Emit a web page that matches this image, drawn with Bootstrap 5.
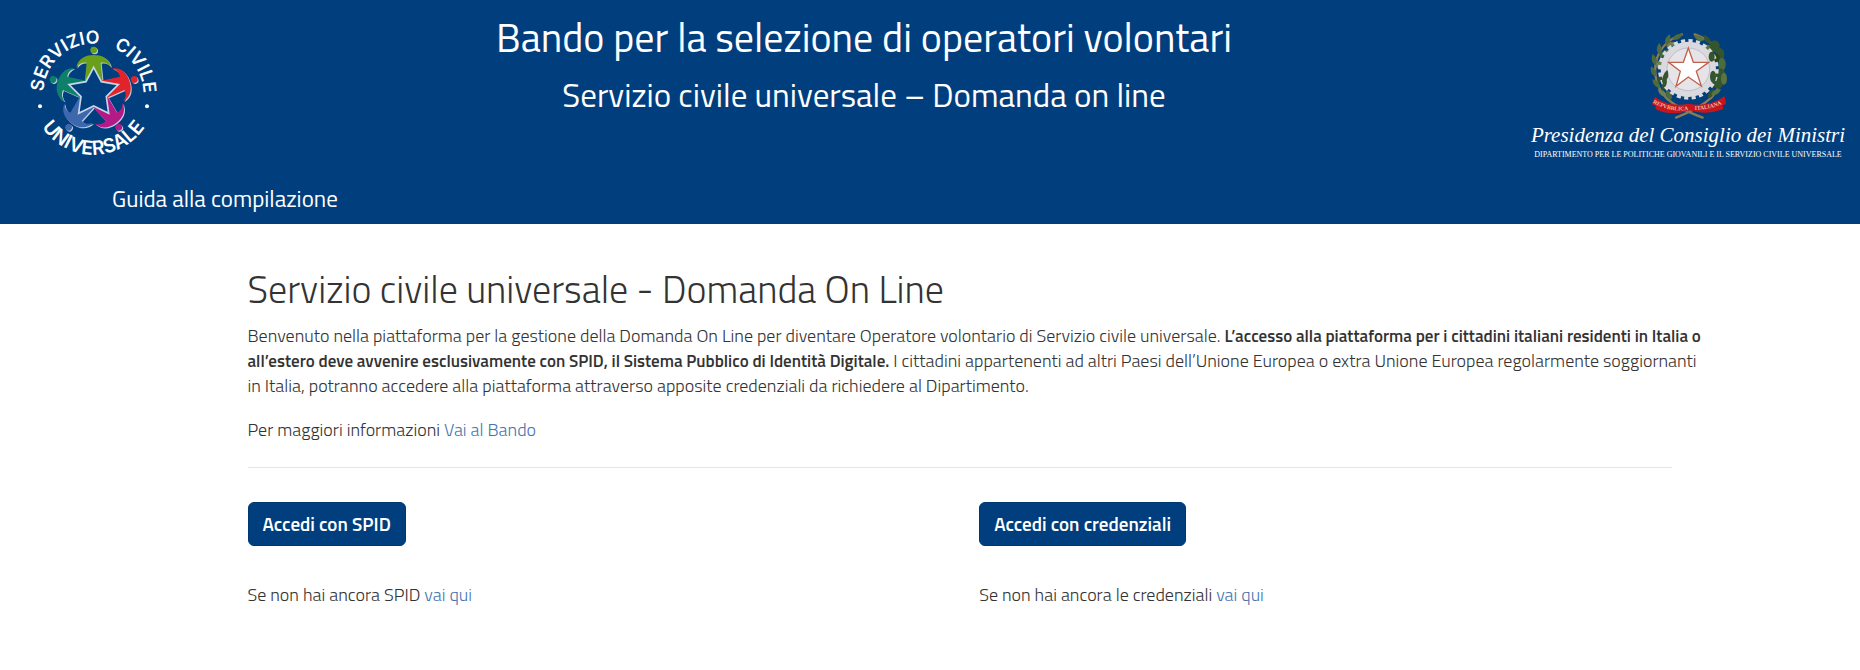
<!DOCTYPE html>
<html lang="it">
<head>
<meta charset="utf-8">
<meta name="viewport" content="width=device-width, initial-scale=1">
<title>Servizio civile universale - Domanda On Line</title>
<link rel="stylesheet" href="https://cdn.jsdelivr.net/npm/bootstrap@5.3.0/dist/css/bootstrap.min.css">
<style>
  body { font-family: "Titillium Web", Roboto, sans-serif; font-size: 18px; line-height: 25px; font-weight: 300; color: #333; }
  a { color: #4675ae; text-decoration: none; }
  a:hover { text-decoration: underline; }
  b { font-size: 17px; line-height: 1; font-weight: 600; }
  .site-head { background: #003e7e; color: #fff; }
  .head-left { width: 200px; padding: 27px 0 0 28px; }
  .head-right { width: 332px; padding: 27px 12px 0 0; }
  .head-title { font-size: 40px; line-height: 44px; font-weight: 400; margin: 16px 0 15px; }
  .head-sub { font-size: 33px; line-height: 40px; font-weight: 400; margin: 0; }
  .script-line { font: italic 21px/26px "Liberation Serif", serif; }
  .dept-line { font: 8px/14px "Liberation Serif", serif; }
  .guide-nav { padding: 22px 0 10px 112px; }
  .guide-nav a { color: #fff; font-size: 23px; line-height: 30px; font-weight: 400; }
  .page-main { width: 79%; margin-left: 12.5%; padding: 40px 15px 0; }
  .page-title { font-size: 38px; line-height: 50px; font-weight: 300; margin: 0 0 9px; }
  .intro { margin: 0 -22px 19px 0; }
  .rule { border-color: #e6e6e6; margin: 25px 15px 34px 0; opacity: 1; }
  .btn-blue { --bs-btn-color: #fff; --bs-btn-bg: #003e7e; --bs-btn-border-color: #00376f; --bs-btn-hover-color: #fff; --bs-btn-hover-bg: #00305f; --bs-btn-hover-border-color: #00305f; --bs-btn-active-bg: #00305f; --bs-btn-active-color: #fff;
    font-size: 19px; line-height: 30px; font-weight: 600; padding: 6px 14px; border-radius: 6px; }
  .hint { margin: 36px 0 0; }
</style>
</head>
<body>
<header class="site-head">
  <div class="d-flex">
    <div class="head-left flex-shrink-0">
      <svg width="130" height="130" viewBox="55 50 390 390" role="img" aria-label="Servizio civile universale" class="d-block overflow-visible">
        <defs>
          <path id="arcTop" d="M101 250 A150 150 0 0 1 401 250"/>
          <path id="arcBottom" d="M65 247 A186 186 0 0 0 437 247"/>
          <g id="person">
            <circle cx="252" cy="119" r="10"/>
            <path d="M200 172C205 143 230 134 252 134S298 142 304 170C296 160 286 154 273 157L279 214L252 222L225 214L231 157C218 155 208 161 200 172Z"/>
          </g>
        </defs>
        <g fill="#b9cbe0" transform="translate(3 3)">
          <use href="#person"/>
          <use href="#person" transform="rotate(72 252 247)"/>
          <use href="#person" transform="rotate(144 252 247)"/>
          <use href="#person" transform="rotate(216 252 247)"/>
          <use href="#person" transform="rotate(288 252 247)"/>
        </g>
        <use href="#person" fill="#6a9f1c"/>
        <use href="#person" fill="#e3232b" transform="rotate(72 252 247)"/>
        <use href="#person" fill="#b41a87" transform="rotate(144 252 247)"/>
        <use href="#person" fill="#3e68ae" transform="rotate(216 252 247)"/>
        <use href="#person" fill="#0c8069" transform="rotate(288 252 247)"/>
        <path d="M252 171L275 214L326 223L290 259L297 309L252 287L207 309L214 259L178 223L229 214Z" fill="#003e7e" stroke="#c5d6e8" stroke-width="5"/>
        <g fill="#fff" font-family="Inter, sans-serif" font-weight="600" font-size="54">
          <text><textPath href="#arcTop" startOffset="6">SERVIZIO</textPath></text>
          <text><textPath href="#arcTop" startOffset="470" text-anchor="end">CIVILE</textPath></text>
          <text font-size="58"><textPath href="#arcBottom" startOffset="50%" text-anchor="middle">UNIVERSALE</textPath></text>
        </g>
        <circle cx="91" cy="288" r="6" fill="#fff"/><circle cx="412" cy="288" r="6" fill="#fff"/>
      </svg>
    </div>
    <div class="flex-grow-1 text-center">
      <h1 class="head-title">Bando per la selezione di operatori volontari</h1>
      <h2 class="head-sub">Servizio civile universale – Domanda on line</h2>
    </div>
    <div class="head-right flex-shrink-0 d-flex flex-column align-items-center text-nowrap">
      <svg width="84" height="95" viewBox="410 50 252 285" role="img" aria-label="Repubblica Italiana">
        <defs>
          <path id="leaf" d="M0 0C-10 -8 -10 -22 0 -34C9 -22 9 -8 0 0Z"/>
          <path id="ribbonL" d="M430 277Q484 310 550 297"/>
          <path id="ribbonR" d="M556 299Q610 298 652 274"/>
        </defs>
        <g fill="none" stroke="#8b7a55" stroke-width="7" stroke-linecap="round">
          <path d="M518 72C430 102 414 200 470 262Q500 292 580 322"/>
          <path d="M556 72C650 102 662 200 606 262Q574 292 500 322"/>
        </g>
        <g fill="#4d6b3c">
          <use href="#leaf" transform="translate(490 88) rotate(62)"/>
          <use href="#leaf" transform="translate(470 104) rotate(20)"/>
          <use href="#leaf" transform="translate(470 108) rotate(70)" fill="#6f8050"/>
          <use href="#leaf" transform="translate(450 132) rotate(0)"/>
          <use href="#leaf" transform="translate(452 140) rotate(48)"/>
          <use href="#leaf" transform="translate(439 164) rotate(-15)"/>
          <use href="#leaf" transform="translate(442 174) rotate(30)" fill="#6f8050"/>
          <use href="#leaf" transform="translate(440 198) rotate(-26)"/>
          <use href="#leaf" transform="translate(446 218) rotate(26)" fill="#35522e"/>
          <use href="#leaf" transform="translate(452 232) rotate(-42)"/>
          <use href="#leaf" transform="translate(462 240) rotate(8)" fill="#35522e"/>
          <use href="#leaf" transform="translate(472 258) rotate(-52)" fill="#6f8050"/>
          <use href="#leaf" transform="translate(486 268) rotate(-25)"/>
        </g>
        <g fill="#35552e">
          <use href="#leaf" transform="translate(584 90) rotate(-65)" fill="#5a753f"/>
          <use href="#leaf" transform="translate(604 100) rotate(-40)"/>
          <use href="#leaf" transform="translate(612 112) rotate(-82)" fill="#5a753f"/>
          <ellipse cx="616" cy="108" rx="15" ry="18"/>
          <ellipse cx="631" cy="132" rx="14" ry="19"/>
          <ellipse cx="618" cy="143" rx="13" ry="14" fill="#26451f"/>
          <ellipse cx="638" cy="162" rx="11" ry="20" fill="#4d6b3c"/>
          <ellipse cx="631" cy="190" rx="17" ry="16"/>
          <ellipse cx="626" cy="217" rx="16" ry="18"/>
          <ellipse cx="644" cy="205" rx="9" ry="18" fill="#5a753f"/>
          <use href="#leaf" transform="translate(596 264) rotate(34)"/>
          <use href="#leaf" transform="translate(606 254) rotate(60)" fill="#5a753f"/>
        </g>
        <circle cx="537" cy="177" r="83" fill="#d9d9df"/>
        <circle cx="537" cy="177" r="86" fill="none" stroke="#d9d9df" stroke-width="10" stroke-dasharray="12.5 10"/>
        <circle cx="537" cy="177" r="64" fill="#e6e4e8" stroke="#bdbfca" stroke-width="3"/>
        <g fill="#35552e">
          <use href="#leaf" transform="translate(468 228) rotate(-8)"/>
          <use href="#leaf" transform="translate(466 212) rotate(14)"/>
          <ellipse cx="607" cy="139" rx="9" ry="15"/>
          <ellipse cx="611" cy="199" rx="9" ry="18"/>
        </g>
        <path d="M537 113L552 156L598 156L561 183L576 227L537 200L500 228L513 183L478 156L522 156Z" fill="#fff" stroke="#c0624b" stroke-width="4"/>
        <path d="M437 260Q480 292 538 280Q596 292 646 258L650 282L640 284L642 296Q590 316 540 300Q486 320 438 296L440 286L427 282Z" fill="#c5161d"/>
        <g fill="#f0b9a6" font-family="Liberation Serif, serif" font-weight="700" font-size="17">
          <text><textPath href="#ribbonL">REPVBBLICA</textPath></text>
          <text><textPath href="#ribbonR">ITALIANA</textPath></text>
        </g>
      </svg>
      <div class="script-line">Presidenza del Consiglio dei Ministri</div>
      <div class="dept-line">DIPARTIMENTO PER LE POLITICHE GIOVANILI E IL SERVIZIO CIVILE UNIVERSALE</div>
    </div>
  </div>
  <nav class="guide-nav"><a href="#">Guida alla compilazione</a></nav>
</header>

<main class="page-main">
  <h2 class="page-title">Servizio civile universale - Domanda On Line</h2>
  <p class="intro">Benvenuto nella piattaforma per la gestione della Domanda On Line per diventare Operatore volontario di Servizio civile universale. <b>L’accesso alla piattaforma per i cittadini italiani residenti in Italia o all’estero deve avvenire esclusivamente con SPID, il Sistema Pubblico di Identità Digitale.</b> I cittadini appartenenti ad altri Paesi dell’Unione Europea o extra Unione Europea regolarmente soggiornanti in Italia, potranno accedere alla piattaforma attraverso apposite credenziali da richiedere al Dipartimento.</p>
  <p class="m-0">Per maggiori informazioni <a href="#">Vai al Bando</a></p>
  <hr class="rule">
  <div class="row">
    <div class="col-6">
      <button type="button" class="btn btn-blue">Accedi con SPID</button>
      <p class="hint">Se non hai ancora SPID <a href="#">vai qui</a></p>
    </div>
    <div class="col-6">
      <button type="button" class="btn btn-blue">Accedi con credenziali</button>
      <p class="hint">Se non hai ancora le credenziali <a href="#">vai qui</a></p>
    </div>
  </div>
</main>
<script src="https://cdn.jsdelivr.net/npm/bootstrap@5.3.0/dist/js/bootstrap.bundle.min.js"></script>
</body>
</html>
